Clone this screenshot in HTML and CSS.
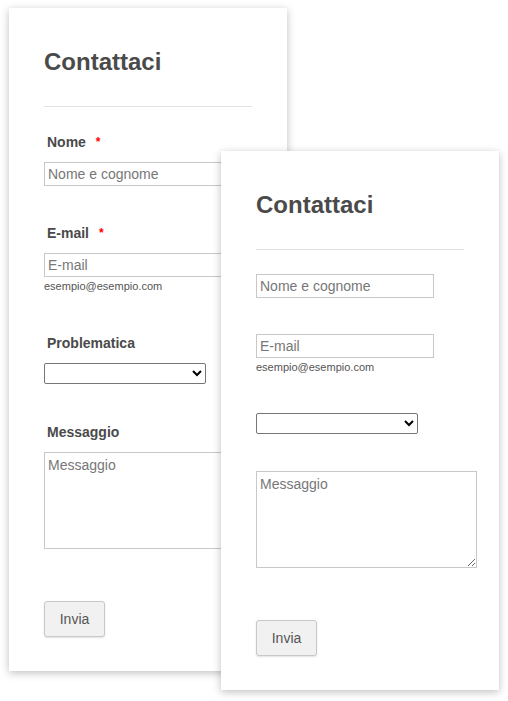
FILE: index.html
```html
<!DOCTYPE html>
<html lang="it">
<head>
  <meta charset="UTF-8" />
  <meta name="viewport" content="width=device-width, initial-scale=1.0" />
  <title>Contattaci</title>
  <link rel="stylesheet" href="styles.css">
</head>
<body>
<div class="stage">

  <!-- modulo con etichette -->
  <form class="card">
    <h1>Contattaci</h1>
    <hr>

    <div class="field">
      <label>Nome <span class="req">*</span></label>
      <input type="text" placeholder="Nome e cognome">
    </div>

    <div class="field">
      <label>E-mail <span class="req">*</span></label>
      <input type="text" placeholder="E-mail">
      <div class="hint">esempio@esempio.com</div>
    </div>

    <div class="field">
      <label>Problematica</label>
      <select><option></option></select>
    </div>

    <div class="field field-msg">
      <label>Messaggio</label>
      <textarea placeholder="Messaggio"></textarea>
    </div>

    <button type="button">Invia</button>
  </form>

  <!-- stesso modulo senza etichette -->
  <form class="card card-nolabel">
    <h1>Contattaci</h1>
    <hr>

    <div class="field">
      <input type="text" placeholder="Nome e cognome">
    </div>

    <div class="field">
      <input type="text" placeholder="E-mail">
      <div class="hint">esempio@esempio.com</div>
    </div>

    <div class="field">
      <select><option></option></select>
    </div>

    <div class="field field-msg">
      <textarea placeholder="Messaggio"></textarea>
    </div>

    <button type="button">Invia</button>
  </form>

</div>
</body>
</html>
```

FILE: styles.css
```css
:root {
  --testo: #4a4a4a;
  --bordo: #c8c8c8;
  --grigio: #f1f1f1;
}

* { box-sizing: border-box; margin: 0; padding: 0; }

body {
  font-family: 'Liberation Sans', Arial, sans-serif;
  background: #fff;
  color: var(--testo);
}

.stage {
  position: relative;
  width: 508px;
  height: 701px;
  padding: 8px 0 0 9px;
}

.card {
  width: 278px;
  padding: 40px 35px 34px;
  background: #fff;
  box-shadow: 0 2px 8px rgba(0,0,0,0.25);
  display: flex;
  flex-direction: column;
  align-items: flex-start;
}

.card-nolabel {
  position: absolute;
  left: 221px;
  top: 151px;
}

h1 {
  font-size: 24px;
  line-height: 28px;
  font-weight: bold;
  color: var(--testo);
}

hr {
  align-self: stretch;
  border: none;
  border-top: 1px solid #e3e3e3;
  margin: 30px 0 24px;
}

.field {
  display: flex;
  flex-direction: column;
  align-items: flex-start;
}

.field + .field { margin-top: 36px; }
.field-msg { margin-top: 37px !important; }

label {
  font-size: 14px;
  line-height: 16px;
  font-weight: bold;
  padding: 3px 0 0 3px;
  margin-bottom: 12px;
}

.req {
  color: #f00;
  font-size: 12px;
  margin-left: 6px;
  vertical-align: 1px;
}

input {
  width: 178px;
  height: 24px;
  border: 1px solid var(--bordo);
  padding: 3px;
  font: 14px/16px 'Liberation Sans', Arial, sans-serif;
  color: var(--testo);
  outline: none;
}

input::placeholder,
textarea::placeholder { color: #777; }

.hint {
  font-size: 11px;
  line-height: 15px;
  margin: 2px 0 2px;
  color: #555;
}

select {
  width: 162px;
  height: 21px;
  font-size: 13px;
  border: 1px solid #767676;
  border-radius: 2px;
  background: #fff;
}

textarea {
  width: 221px;
  height: 97px;
  border: 1px solid var(--bordo);
  padding: 4px 3px;
  font: 14px/16px 'Liberation Sans', Arial, sans-serif;
  color: var(--testo);
  outline: none;
}

button {
  margin-top: 52px;
  width: 61px;
  height: 36px;
  background: var(--grigio);
  border: 1px solid var(--bordo);
  border-radius: 3px;
  box-shadow: 0 1px 2px rgba(0,0,0,0.12);
  font: 14px 'Liberation Sans', Arial, sans-serif;
  color: #555;
  cursor: pointer;
}
```
